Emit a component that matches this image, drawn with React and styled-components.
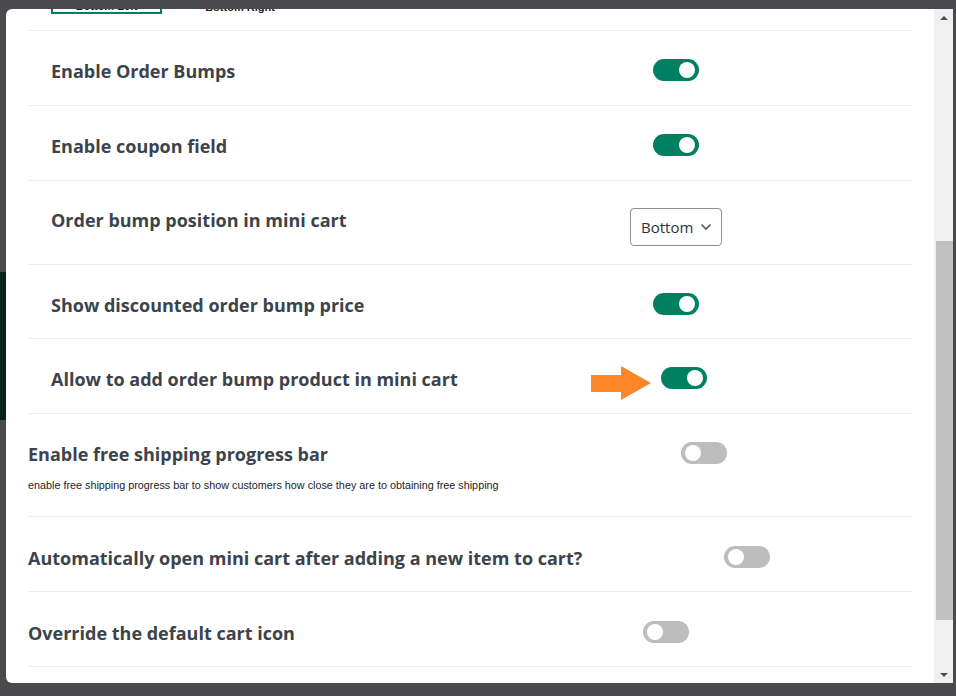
import React from 'react';
import styled, { createGlobalStyle } from 'styled-components';

const GlobalStyle = createGlobalStyle`
    html, body {
        margin: 0;
        padding: 0;
        height: 100%;
        background: #4a4a4c;
        overflow: hidden;
    }
    #root {
        height: 100%;
    }
`

const Page = styled.div`
    position: relative;
    height: 696px;
    box-sizing: border-box;
    padding: 9px 3px 13px 6px;
    display: flex;
`

const BackdropStrip = styled.div`
    position: absolute;
    left: 0;
    top: 272px;
    width: 8px;
    height: 148px;
    background: #0b2219;
`

const Modal = styled.div`
    position: relative;
    flex: 1;
    display: flex;
    background: #ffffff;
    border-radius: 6px 0 0 6px;
    overflow: hidden;
`

const Body = styled.div`
    flex: 1;
    overflow: hidden;
    padding: 0 22px;
`

const Scroller = styled.div`
    width: 19px;
    background: #f0f0f0;
    display: flex;
    flex-direction: column;
    align-items: center;
    justify-content: space-between;
    padding: 7px 0 6px;
    box-sizing: border-box;
`

const ScrollArrow = styled.div`
    width: 0;
    height: 0;
    border-left: 4px solid transparent;
    border-right: 4px solid transparent;
    ${(p) => (p.down
        ? 'border-top: 4px solid #505050;'
        : 'border-bottom: 4px solid #505050;')}
`

const ScrollTrack = styled.div`
    flex: 1;
    width: 100%;
    display: flex;
    flex-direction: column;
    padding: 0 0 0 2px;
    box-sizing: border-box;
`

const ScrollThumb = styled.div`
    margin-top: 221px;
    height: 379px;
    background: #c1c1c1;
`

const PickerClip = styled.div`
    height: 21px;
    overflow: hidden;
    border-bottom: 1px solid #ececec;
`

const Picker = styled.div`
    margin-top: -35px;
    padding-left: 23px;
    display: flex;
    align-items: flex-end;
    gap: 50px;
`

const PickerOption = styled.div`
    width: ${(p) => p.w}px;
    height: 40px;
    box-sizing: border-box;
    border: 2px solid ${(p) => (p.active ? '#008060' : 'transparent')};
    border-width: ${(p) => (p.active ? '2px' : '0')};
    display: flex;
    align-items: flex-end;
    justify-content: center;
    font-family: "Liberation Sans", Arial, sans-serif;
    font-size: 11px;
    font-weight: 700;
    color: #1d2327;
    line-height: 12px;
    white-space: nowrap;
    padding-bottom: ${(p) => (p.active ? 0 : 1)}px;
`

const Row = styled.div`
    display: flex;
    align-items: flex-start;
    padding: ${(p) => p.pad || '28px 0 22px'};
    border-bottom: 1px solid #ececec;
`

const LabelCell = styled.div`
    width: ${(p) => p.w}px;
    flex-shrink: 0;
    box-sizing: border-box;
    padding-left: ${(p) => (p.nested ? 23 : 0)}px;
`

const Label = styled.div`
    font-family: "Open Sans", "DejaVu Sans", sans-serif;
    font-weight: 700;
    font-size: 18px;
    line-height: 24px;
    color: #3c434a;
    white-space: nowrap;
`

const Hint = styled.div`
    margin-top: 11px;
    font-family: "Liberation Sans", Arial, sans-serif;
    font-size: 10.8px;
    line-height: 16px;
    color: #1d2327;
    white-space: nowrap;
`

const ControlCell = styled.div`
    position: relative;
    display: flex;
    justify-content: ${(p) => (p.center ? 'center' : 'flex-start')};
    width: ${(p) => (p.center ? '120px' : 'auto')};
`

const Toggle = styled.div`
    width: 46px;
    height: 22px;
    border-radius: 11px;
    background: ${(p) => (p.on ? '#008060' : '#bdbdbd')};
    display: flex;
    align-items: center;
    justify-content: ${(p) => (p.on ? 'flex-end' : 'flex-start')};
    padding: 0 4px;
    box-sizing: border-box;
`

const Knob = styled.div`
    width: 16px;
    height: 16px;
    border-radius: 50%;
    background: #ffffff;
`

const Select = styled.div`
    width: 92px;
    height: 38px;
    box-sizing: border-box;
    border: 1px solid #8c8f94;
    border-radius: 4px;
    display: flex;
    align-items: center;
    padding: 0 9px 0 10px;
    justify-content: space-between;
    font-family: "Open Sans", "DejaVu Sans", sans-serif;
    font-size: 15px;
    color: #2c3338;
`

const Pointer = styled.svg`
    position: absolute;
    right: calc(100% + 10px);
    top: -1px;
`

const Switch = ({ on }) => (
    <Toggle on={on}>
        <Knob />
    </Toggle>
);

const Chevron = () => (
    <svg width="12" height="8" viewBox="0 0 12 8">
        <path d="M1.5 1.5 L6 6 L10.5 1.5" fill="none" stroke="#50575e" strokeWidth="1.6" />
    </svg>
);

const OrangeArrow = () => (
    <Pointer width="60" height="34" viewBox="0 0 60 34">
        <polygon points="0,9 30,9 30,0 60,17 30,34 30,26 0,26" fill="#fd8629" />
    </Pointer>
);

export default function App() {
    return (
        <>
            <GlobalStyle />
            <Page>
                <BackdropStrip />
                <Modal>
                    <Body>
                        <PickerClip>
                            <Picker>
                                <PickerOption w={111} active>Bottom Left</PickerOption>
                                <PickerOption w={56}>Bottom Right</PickerOption>
                            </Picker>
                        </PickerClip>

                        <Row>
                            <LabelCell w={588} nested><Label>Enable Order Bumps</Label></LabelCell>
                            <ControlCell center><Switch on /></ControlCell>
                        </Row>
                        <Row>
                            <LabelCell w={588} nested><Label>Enable coupon field</Label></LabelCell>
                            <ControlCell center><Switch on /></ControlCell>
                        </Row>
                        <Row pad="27px 0 18px">
                            <LabelCell w={588} nested><Label>Order bump position in mini cart</Label></LabelCell>
                            <ControlCell center>
                                <Select>
                                    <span>Bottom</span>
                                    <Chevron />
                                </Select>
                            </ControlCell>
                        </Row>
                        <Row pad="28px 0 21px">
                            <LabelCell w={588} nested><Label>Show discounted order bump price</Label></LabelCell>
                            <ControlCell center><Switch on /></ControlCell>
                        </Row>
                        <Row>
                            <LabelCell w={633} nested><Label>Allow to add order bump product in mini cart</Label></LabelCell>
                            <ControlCell>
                                <OrangeArrow />
                                <Switch on />
                            </ControlCell>
                        </Row>

                        <Row pad="28px 0 23px">
                            <LabelCell w={653}>
                                <Label>Enable free shipping progress bar</Label>
                                <Hint>enable free shipping progress bar to show customers how close they are to obtaining free shipping</Hint>
                            </LabelCell>
                            <ControlCell><Switch /></ControlCell>
                        </Row>
                        <Row pad="29px 0 21px">
                            <LabelCell w={696}><Label>Automatically open mini cart after adding a new item to cart?</Label></LabelCell>
                            <ControlCell><Switch /></ControlCell>
                        </Row>
                        <Row pad="29px 0 21px">
                            <LabelCell w={615}><Label>Override the default cart icon</Label></LabelCell>
                            <ControlCell><Switch /></ControlCell>
                        </Row>
                    </Body>
                    <Scroller>
                        <ScrollArrow />
                        <ScrollTrack>
                            <ScrollThumb />
                        </ScrollTrack>
                        <ScrollArrow down />
                    </Scroller>
                </Modal>
            </Page>
        </>
    );
}
